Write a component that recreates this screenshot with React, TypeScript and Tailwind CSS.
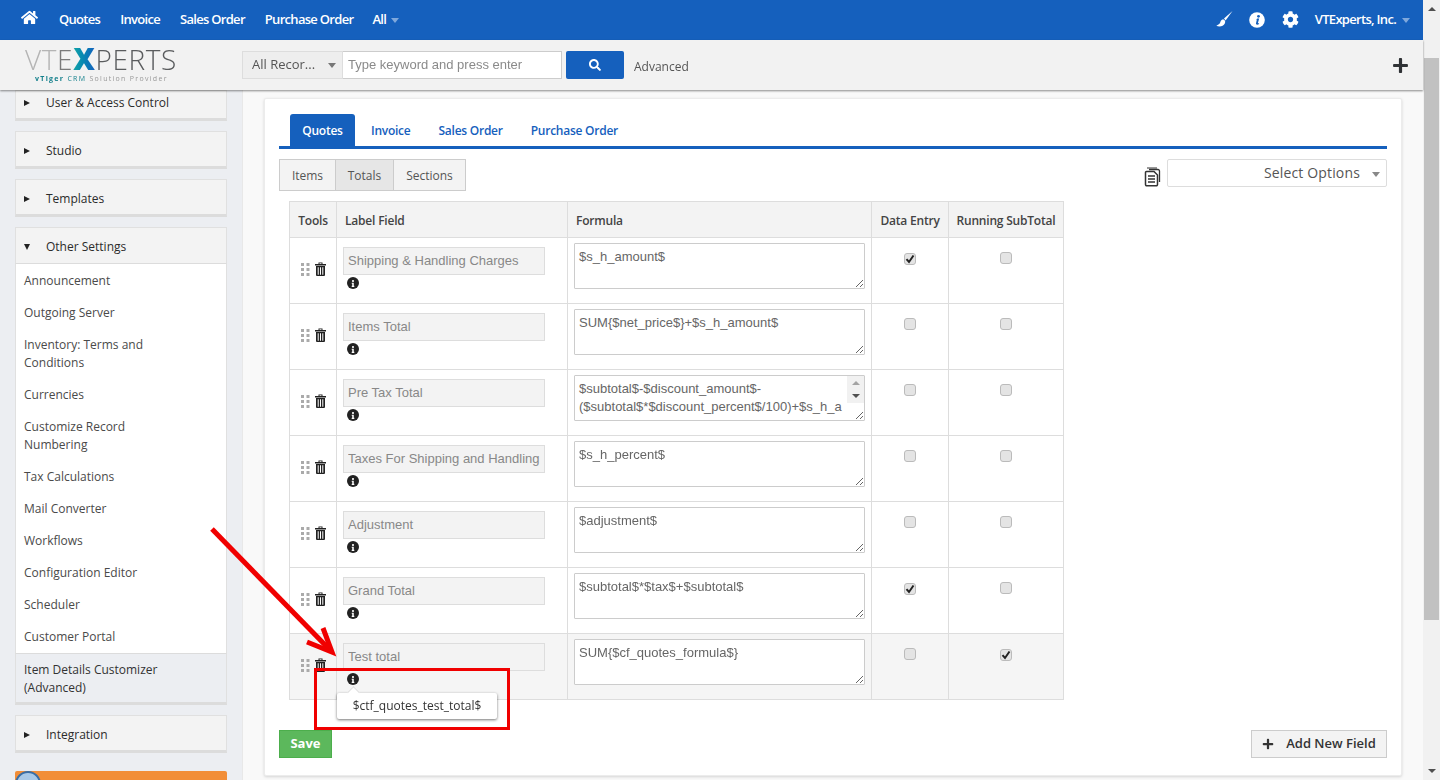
import { FaHome, FaCog, FaSearch, FaPlus, FaInfo } from 'react-icons/fa';

const sidebarLinks = [
  'Announcement',
  'Outgoing Server',
  'Inventory: Terms and Conditions',
  'Currencies',
  'Customize Record Numbering',
  'Tax Calculations',
  'Mail Converter',
  'Workflows',
  'Configuration Editor',
  'Scheduler',
  'Customer Portal',
];

const rows = [
  { label: 'Shipping & Handling Charges', formula: '$s_h_amount$', entry: true, running: false },
  { label: 'Items Total', formula: 'SUM{$net_price$}+$s_h_amount$', entry: false, running: false },
  {
    label: 'Pre Tax Total',
    formula: '$subtotal$-$discount_amount$-($subtotal$*$discount_percent$/100)+$s_h_amount$',
    entry: false,
    running: false,
    scroll: true,
  },
  { label: 'Taxes For Shipping and Handling', formula: '$s_h_percent$', entry: false, running: false },
  { label: 'Adjustment', formula: '$adjustment$', entry: false, running: false },
  { label: 'Grand Total', formula: '$subtotal$*$tax$+$subtotal$', entry: true, running: false },
  { label: 'Test total', formula: 'SUM{$cf_quotes_formula$}', entry: false, running: true },
];

function Caret({ className }: { className: string }) {
  return <span className={`inline-block w-0 h-0 border-x-[4px] border-x-transparent border-t-[5px] ${className}`} />;
}

function SideCard({ title, cut, open }: { title: string; cut?: boolean; open?: boolean }) {
  return (
    <div
      className={`${cut ? 'h-[31px] pb-[3px]' : open ? 'h-[37px] mt-[10px] pt-[3px]' : 'h-[38px] mt-[10px] pt-[4px]'} flex items-center bg-[#f3f3f3] border border-[#e0e0e0] ${open ? 'border-b-[#dcdcdc]' : 'border-b-[3px] border-b-[#dcdcdc]'} pl-[8px] text-[12px] text-[#2b2b2b]`}
    >
      {open ? (
        <span className="w-0 h-0 border-x-[3.5px] border-x-transparent border-t-[6px] border-t-[#222]" />
      ) : (
        <span className="w-0 h-0 border-y-[3.5px] border-y-transparent border-l-[6px] border-l-[#222]" />
      )}
      <span className="ml-[16px]">{title}</span>
    </div>
  );
}

function Check({ on }: { on: boolean }) {
  return (
    <span className="inline-flex items-center justify-center w-[12px] h-[12px] rounded-[3px] bg-[#e4e4e4] border border-[#bbb]">
      {on && (
        <svg width="10" height="10" viewBox="0 0 10 10">
          <path d="M1.5 5.2 L4 8 L8.5 1.5" fill="none" stroke="#222" strokeWidth="2" />
        </svg>
      )}
    </span>
  );
}

function DragDots() {
  return (
    <svg width="9" height="13" viewBox="0 0 9 13" className="fill-[#aaa]">
      {[0, 5, 10].map((y) => (
        <g key={y}>
          <rect x="0" y={y} width="3" height="3" />
          <rect x="5.5" y={y} width="3" height="3" />
        </g>
      ))}
    </svg>
  );
}

function TrashIcon() {
  return (
    <svg width="11" height="14" viewBox="0 0 11 14" className="fill-[#222]">
      <path d="M3.5 2 V0.5 H7.5 V2 H11 V3.5 H0 V2 Z M4.5 1.2 V2 H6.5 V1.2 Z" />
      <path d="M1 4 H10 V13 a1 1 0 0 1 -1 1 H2 a1 1 0 0 1 -1 -1 Z M2.7 5.2 V12.8 H3.7 V5.2 Z M5 5.2 V12.8 H6 V5.2 Z M7.3 5.2 V12.8 H8.3 V5.2 Z" />
    </svg>
  );
}

export default function App() {
  return (
    <div className="relative flex h-[780px] w-[1440px] overflow-hidden bg-[#f9f9f9] font-['Open_Sans',sans-serif]">
      <div className="flex flex-col w-[1423px] h-full">
        {/* Top nav */}
        <div className="flex items-center h-[40px] bg-[#1560bd] text-white text-[13px] font-semibold tracking-[-0.7px] shrink-0">
          <FaHome className="ml-[21px] mb-[5px] w-[17px] h-[17px]" />
          <div className="flex items-center gap-[20px] ml-[21px]">
            <span>Quotes</span>
            <span>Invoice</span>
            <span>Sales Order</span>
            <span>Purchase Order</span>
            <span className="flex items-center gap-[5px] -ml-[1px]">
              All <Caret className="border-t-[#7fa8dc]" />
            </span>
          </div>
          <div className="ml-auto flex items-center">
            <svg width="17" height="16" viewBox="0 0 17 16" className="mb-[2px] fill-white">
              <path d="M16.5 0 L8 7.6 L9.6 9.4 Z" />
              <path d="M7.2 8.2 C5.2 8.4 4.6 10 4.2 11.4 C3.8 12.8 2.2 13.6 0.3 14.8 C3.2 16.2 7.4 15.6 8.8 12.6 C9.4 11.2 9.2 10 8.8 9.4 Z" />
            </svg>
            <svg width="16" height="16" viewBox="0 0 16 16" className="ml-[16px] mb-[1px]">
              <circle cx="8" cy="8" r="7.8" fill="white" />
              <path d="M8.2 6.6 H10.2 L8.9 11 C8.8 11.5 9.2 11.6 10 11.1 L10.1 12 C8.8 12.9 6.7 13.1 7 11.3 L7.8 7.7 L7.2 7.6 Z" fill="#1560bd" />
              <circle cx="9.5" cy="4.3" r="1.4" fill="#1560bd" />
            </svg>
            <FaCog className="ml-[17px] mb-[1px] w-[17px] h-[17px]" />
            <span className="ml-[16px]">VTExperts, Inc.</span>
            <Caret className="ml-[6px] mr-[13px] border-t-[#7fa8dc]" />
          </div>
        </div>

        {/* Search bar */}
        <div className="relative z-10 flex items-center h-[50px] bg-[#f2f2f2] shadow-[0_1px_2px_rgba(0,0,0,0.45)] shrink-0">
          <div className="ml-[25px] w-[152px] flex flex-col items-start">
            <div className="h-[26px] leading-[26px] text-[28px] font-light tracking-[0.6px] text-[#5a5c5e] whitespace-nowrap">
              <span className="text-[#b4b4b4]">VT</span>
              <span className="text-[#7a7a7a]">E</span>
              <span className="text-[30px] font-extrabold bg-gradient-to-r from-[#14a5a5] to-[#1560bd] bg-clip-text text-transparent">X</span>
              PERTS
            </div>
            <div className="ml-[10px] text-[7px] leading-[10px] tracking-[1.3px] text-[#999] whitespace-nowrap mt-[2px]">
              <span className="text-[#14808c] font-bold">vTiger</span> <span className="text-[#14808c]">CRM</span> Solution Provider
            </div>
          </div>
          <div className="ml-[65px] flex items-center h-[28px] w-[101px] bg-[#eeeeee] border border-[#ddd] text-[13px] text-[#555] pl-[9px] pr-[6px] justify-between">
            <span>All Recor...</span>
            <Caret className="border-t-[#777]" />
          </div>
          <input
            readOnly
            placeholder="Type keyword and press enter"
            className="w-[219px] h-[28px] bg-white border border-[#ccc] border-l-0 px-[5px] pb-[2px] text-[13px] font-['Liberation_Sans',sans-serif] placeholder:text-[#8a8a8a] outline-none"
          />
          <div className="ml-[4px] flex items-center justify-center w-[58px] h-[28px] bg-[#1560bd] rounded-[2px] text-white">
            <FaSearch className="w-[12px] h-[12px]" />
          </div>
          <span className="ml-[10px] mt-[3px] text-[12px] text-[#555]">Advanced</span>
          <FaPlus className="ml-auto mr-[14px] w-[17px] h-[17px] text-[#2f3235]" />
        </div>

        <div className="flex flex-1 min-h-0">
          {/* Sidebar */}
          <aside className="w-[243px] shrink-0 bg-[#eceef2] border-r border-[#e8e8e8] pl-[15px] pr-[15px] overflow-hidden">
            <SideCard title="User & Access Control" cut />
            <SideCard title="Studio" />
            <SideCard title="Templates" />
            <SideCard title="Other Settings" open />
            <div className="bg-white border-x border-[#e0e0e0] pt-[1px]">
              {sidebarLinks.map((link) => (
                <div key={link} className="pl-[8px] pr-[45px] py-[7px] text-[12px] leading-[18px] text-[#4a4a4a]">
                  {link}
                </div>
              ))}
            </div>
            <div className="h-[52px] bg-[#eceef2] border border-t-[#dcdcdc] border-[#e0e0e0] border-b-[3px] border-b-[#dcdcdc] pl-[8px] pr-[45px] pt-[7px] text-[12px] leading-[18px] text-[#333]">
              Item Details Customizer (Advanced)
            </div>
            <SideCard title="Integration" />
            <div className="mt-[18px] h-[30px] bg-[#f28e38] rounded-t-[2px] overflow-hidden">
              <div className="w-[26px] h-[26px] rounded-full bg-[#a9c8e6] border-2 border-[#3a6ea5]" />
            </div>
          </aside>

          {/* Main */}
          <main className="flex-1 min-w-0 pt-[8px] pl-[21px] pr-[21px]">
            <div className="h-[678px] bg-white border border-[#ececec] shadow-[0_1px_3px_rgba(0,0,0,0.15)] rounded-[2px] px-[14px] pt-[15px]">
              {/* Tabs */}
              <div className="flex items-end h-[35px] border-b-[3px] border-[#1560bd] text-[12px] font-semibold tracking-[-0.25px] text-[#1560bd] pl-[11px]">
                <div className="flex items-center justify-center w-[65px] h-[32px] pt-[2px] bg-[#1560bd] text-white rounded-t-[3px]">Quotes</div>
                <div className="flex items-center h-[32px] pt-[2px] ml-[16px]">Invoice</div>
                <div className="flex items-center h-[32px] pt-[2px] ml-[28px]">Sales Order</div>
                <div className="flex items-center h-[32px] pt-[2px] ml-[28px]">Purchase Order</div>
              </div>

              {/* Sub tabs and options */}
              <div className="flex items-start mt-[10px]">
                <div className="flex h-[32px] text-[12px] text-[#555] border border-[#ccc] bg-[#f3f3f3]">
                  <div className="flex items-center justify-center w-[56px] pt-[2px] border-r border-[#ccc]">Items</div>
                  <div className="flex items-center justify-center w-[58px] pt-[2px] border-r border-[#ccc] bg-[#e6e6e6]">Totals</div>
                  <div className="flex items-center justify-center w-[71px] pt-[2px]">Sections</div>
                </div>
                <svg width="17" height="20" viewBox="0 0 17 20" className="ml-auto mt-[8px] fill-none stroke-[#333]">
                  <path d="M5 2.5 H14 a1.5 1.5 0 0 1 1.5 1.5 V15" strokeWidth="1.3" />
                  <path d="M3 1 H13" strokeWidth="1" />
                  <path d="M2.5 4.5 H10 L13.5 8 V17.5 a1.2 1.2 0 0 1 -1.2 1.2 H2.7 a1.2 1.2 0 0 1 -1.2 -1.2 V5.5 a1 1 0 0 1 1 -1 Z" strokeWidth="1.5" />
                  <path d="M4 9 H11 M4 12 H11 M4 15 H11" strokeWidth="1.4" />
                </svg>
                <div className="ml-[6px] flex items-center justify-end w-[220px] h-[28px] bg-white border border-[#ddd] rounded-[2px] pr-[6px] pb-[2px] text-[14px] tracking-[0.15px] text-[#555]">
                  <span>Select Options</span>
                  <Caret className="ml-[12px] mt-[4px] border-t-[#888]" />
                </div>
              </div>

              {/* Totals table */}
              <table className="mt-[10px] ml-[10px] w-[774px] table-fixed border-collapse text-[#444]">
                <colgroup>
                  <col className="w-[47px]" />
                  <col className="w-[231px]" />
                  <col className="w-[304px]" />
                  <col className="w-[77px]" />
                  <col className="w-[115px]" />
                </colgroup>
                <thead>
                  <tr className="h-[36px] bg-[#f3f3f3] text-[12px] tracking-[-0.2px]">
                    <th className="border border-[#ddd] pt-[2px] font-semibold">Tools</th>
                    <th className="border border-[#ddd] pt-[2px] font-semibold text-left pl-[8px]">Label Field</th>
                    <th className="border border-[#ddd] pt-[2px] font-semibold text-left pl-[8px]">Formula</th>
                    <th className="border border-[#ddd] pt-[2px] font-semibold">Data Entry</th>
                    <th className="border border-[#ddd] pt-[2px] font-semibold">Running SubTotal</th>
                  </tr>
                </thead>
                <tbody>
                  {rows.map((row, i) => (
                    <tr key={row.label} className={`h-[66px] ${i === rows.length - 1 ? 'bg-[#f5f5f5]' : ''}`}>
                      <td className="border border-[#ddd] align-top pt-[24px]">
                        <div className="flex items-center pl-[11px] gap-[5px]">
                          <DragDots />
                          <TrashIcon />
                        </div>
                      </td>
                      <td className="border border-[#ddd] align-top pl-[6px] pt-[9px]">
                        <input
                          readOnly
                          value={row.label}
                          className="block w-[202px] h-[28px] bg-[#f3f3f3] border border-[#ddd] px-[4px] pb-[2px] text-[13px] text-[#888] font-['Liberation_Sans',sans-serif] outline-none"
                        />
                        <span className="mt-[2px] ml-[4px] flex items-center justify-center w-[12px] h-[12px] rounded-full bg-[#222] text-white">
                          <FaInfo className="w-[6px] h-[7px]" />
                        </span>
                      </td>
                      <td className="border border-[#ddd] align-top pl-[6px] pt-[5px]">
                        <div className="relative w-[291px]">
                          <textarea
                            readOnly
                            value={row.formula}
                            className={`block w-[291px] h-[46px] bg-white border border-[#ccc] rounded-[1px] pl-[4px] ${row.scroll ? 'pr-[19px]' : 'pr-[4px]'} py-[4px] text-[13px] leading-[18px] text-[#666] font-['Liberation_Sans',sans-serif] outline-none`}
                          />
                          {row.scroll && (
                            <div className="absolute top-[1px] right-[1px] w-[17px] h-[27px] flex flex-col items-center justify-center gap-[9px] bg-[#f1f1f1]">
                              <span className="w-0 h-0 border-x-[4px] border-x-transparent border-b-[4px] border-b-[#a3a3a3]" />
                              <span className="w-0 h-0 border-x-[4px] border-x-transparent border-t-[4px] border-t-[#505050]" />
                            </div>
                          )}
                        </div>
                      </td>
                      <td className="border border-[#ddd] align-top text-center pt-[8px]">
                        <Check on={row.entry} />
                      </td>
                      <td className="border border-[#ddd] align-top text-center pt-[8px]">
                        <Check on={row.running} />
                      </td>
                    </tr>
                  ))}
                </tbody>
              </table>

              {/* Footer buttons */}
              <div className="flex items-start justify-between mt-[30px]">
                <button className="w-[53px] h-[28px] bg-[#5cb85c] border border-[#4cae4c] text-white text-[13px] font-bold">Save</button>
                <button className="flex items-center justify-center w-[136px] h-[28px] bg-[#f3f3f3] border border-[#ccc] text-[13px] font-semibold text-[#333]">
                  <FaPlus className="w-[12px] h-[12px] mr-[12px]" />
                  Add New Field
                </button>
              </div>
            </div>
          </main>
        </div>
      </div>

      {/* Page scrollbar */}
      <div className="flex flex-col items-center w-[17px] bg-[#f1f1f1] shrink-0">
        <span className="mt-[7px] w-0 h-0 border-x-[4px] border-x-transparent border-b-[4px] border-b-[#505050]" />
        <div className="mt-[47px] w-[15px] h-[562px] bg-[#c1c1c1]" />
        <span className="mt-auto mb-[7px] w-0 h-0 border-x-[4px] border-x-transparent border-t-[4px] border-t-[#505050]" />
      </div>

      {/* Annotation drawn over the page */}
      <svg width="1440" height="780" className="absolute inset-0 pointer-events-none">
        <path d="M212 529 L331 651" stroke="#f00000" strokeWidth="5" fill="none" />
        <path d="M307 642 L332 652 L323 628" stroke="#f00000" strokeWidth="5" fill="none" />
      </svg>
      <div className="absolute left-[337px] top-[693px] w-[160px] h-[26px] flex items-center justify-center bg-white rounded-[2px] shadow-[0_1px_3px_rgba(0,0,0,0.55)] text-[12px] text-[#333]">
        <span className="absolute -top-[5px] left-[12px] w-[9px] h-[9px] rotate-45 bg-white border-l border-t border-[#ddd]" />
        <span className="relative">$ctf_quotes_test_total$</span>
      </div>
      <div className="absolute left-[314px] top-[668px] w-[196px] h-[62px] border-[3px] border-[#f00000]" />
    </div>
  );
}
